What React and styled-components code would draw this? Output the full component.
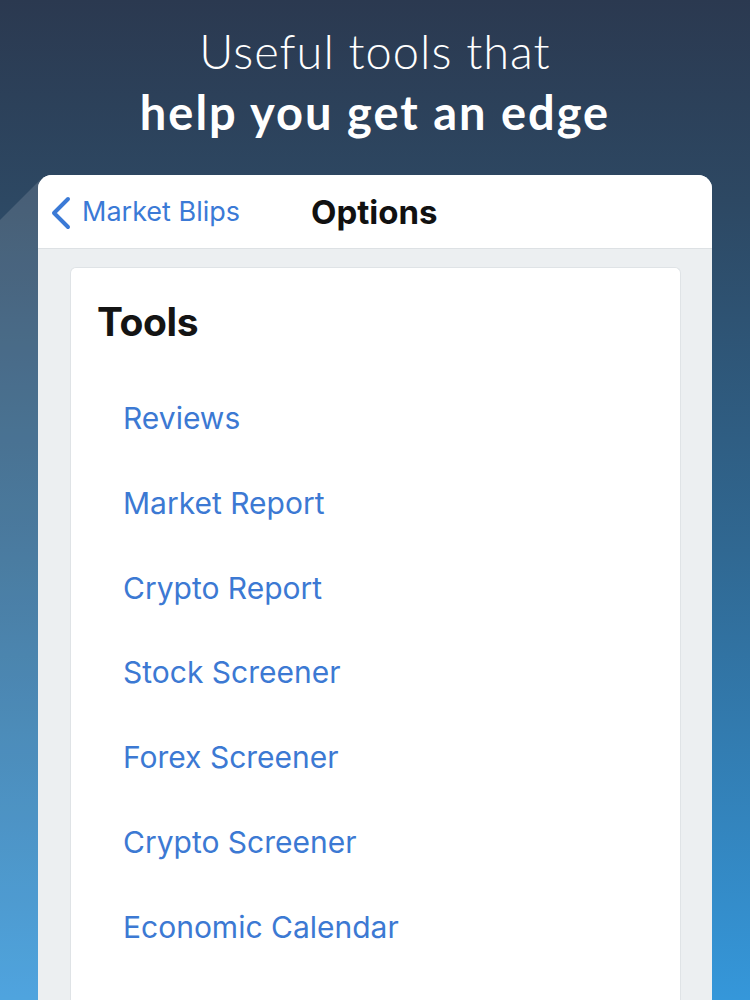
import React from "react";
import styled, { createGlobalStyle } from "styled-components";

const GlobalStyle = createGlobalStyle`
  html, body {
    margin: 0;
    padding: 0;
  }
  body {
    font-family: "Inter", "Liberation Sans", sans-serif;
    -webkit-font-smoothing: antialiased;
  }
`;

const tools = [
  "Reviews",
  "Market Report",
  "Crypto Report",
  "Stock Screener",
  "Forex Screener",
  "Crypto Screener",
  "Economic Calendar",
];

function App() {
  return (
    <>
      <GlobalStyle />
      <Page>
        <Headline>
          <span className="light">Useful tools that</span>
          <strong>help you get an edge</strong>
        </Headline>
        <Phone>
          <NavBar>
            <BackLink>
              <svg width="22" height="34" viewBox="0 0 22 34" fill="none">
                <path
                  d="M18 3 L4 17 L18 31"
                  stroke="currentColor"
                  strokeWidth="4"
                  strokeLinecap="round"
                  strokeLinejoin="round"
                />
              </svg>
              <span>Market Blips</span>
            </BackLink>
            <NavTitle>Options</NavTitle>
          </NavBar>
          <Content>
            <Panel>
              <PanelTitle>Tools</PanelTitle>
              <ToolList>
                {tools.map((t) => (
                  <ToolItem key={t}>{t}</ToolItem>
                ))}
              </ToolList>
            </Panel>
          </Content>
        </Phone>
      </Page>
    </>
  );
}

const Page = styled.div`
  position: relative;
  height: 1000px;
  overflow: hidden;
  display: flex;
  flex-direction: column;
  background: linear-gradient(
    to bottom,
    #2b3950 0%,
    #2d4863 20%,
    #306892 55%,
    #3597da 100%
  );
  &::before {
    content: "";
    position: absolute;
    left: 0;
    top: 0;
    width: 40px;
    height: 100%;
    background: rgba(255, 255, 255, 0.13);
    clip-path: polygon(0 220px, 100% 180px, 100% 100%, 0 100%);
  }
`;

const Headline = styled.h1`
  margin: 0;
  padding: 21px 0 0;
  height: 175px;
  flex-shrink: 0;
  box-sizing: border-box;
  display: flex;
  flex-direction: column;
  align-items: center;
  color: #ffffff;
  font-family: "Lato", "Liberation Sans", sans-serif;
  font-size: 47px;
  line-height: 61px;
  .light {
    font-weight: 300;
    letter-spacing: 1px;
  }
  strong {
    font-weight: 700;
    letter-spacing: 2px;
  }
`;

const Phone = styled.div`
  position: relative;
  flex: 1;
  margin: 0 38px;
  border-radius: 14px 14px 0 0;
  background: #eceff1;
  overflow: hidden;
  display: flex;
  flex-direction: column;
`;

const NavBar = styled.div`
  height: 73px;
  flex-shrink: 0;
  background: #ffffff;
  border-bottom: 1px solid #dde1e4;
  display: flex;
  align-items: center;
  padding-left: 12px;
`;

const BackLink = styled.div`
  display: flex;
  align-items: center;
  gap: 10px;
  color: #3b7ad6;
  font-size: 27px;
  svg {
    margin-top: 2px;
  }
`;

const NavTitle = styled.div`
  margin-left: 71px;
  font-size: 33px;
  font-weight: 700;
  color: #111111;
`;

const Content = styled.div`
  flex: 1;
  padding: 18px 31px 0 32px;
  display: flex;
`;

const Panel = styled.div`
  flex: 1;
  background: #ffffff;
  border: 1px solid #dfe3e6;
  border-bottom: none;
  border-radius: 6px 6px 0 0;
  padding: 30px 0 0 26px;
`;

const PanelTitle = styled.h2`
  margin: 0;
  font-size: 39px;
  line-height: 48px;
  font-weight: 700;
  color: #141414;
  letter-spacing: -0.4px;
`;

const ToolList = styled.ul`
  list-style: none;
  margin: 0;
  padding: 55px 0 0 26px;
  display: flex;
  flex-direction: column;
`;

const ToolItem = styled.li`
  height: 84.8px;
  line-height: 34px;
  font-size: 30px;
  color: #3c79d3;
`;

export default App;
